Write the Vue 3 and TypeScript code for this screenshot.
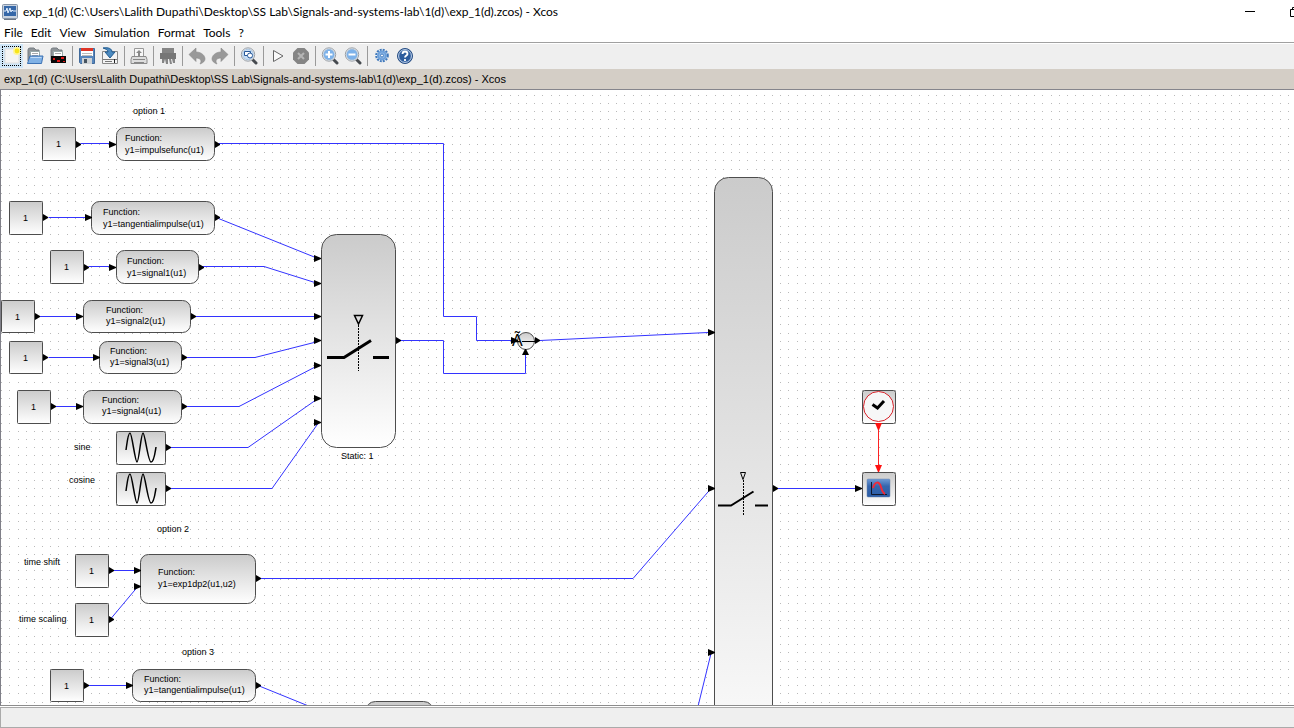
<script setup lang="ts">
import { ref } from 'vue'

interface Point { x: number; y: number }
interface Block extends Point { w: number; h: number }
interface FunctionBlock extends Block { tx: number; ty: number; lead: number; body: string }
interface Label extends Point { text: string }
type Direction = 'right' | 'up' | 'down'
interface Port extends Point { dir: Direction; red?: boolean; small?: boolean }

const documentTitle = 'exp_1(d) (C:\\Users\\Lalith Dupathi\\Desktop\\SS Lab\\Signals-and-systems-lab\\1(d)\\exp_1(d).zcos) - Xcos'
const menus = ['File', 'Edit', 'View', 'Simulation', 'Format', 'Tools', '?']
const active = ref('New')

const toolGroups: string[][] = [
  ['New', 'Open', 'Open in Scilab'],
  ['Save', 'Export'],
  ['Print'],
  ['Delete'],
  ['Undo', 'Redo'],
  ['Fit to view'],
  ['Start', 'Stop'],
  ['Zoom in', 'Zoom out'],
  ['Demonstrations', 'Help'],
]

const constants: Block[] = [
  { x: 42, y: 127, w: 33, h: 33 },
  { x: 9, y: 201, w: 33, h: 33 },
  { x: 50, y: 250, w: 33, h: 33 },
  { x: 1, y: 300, w: 33, h: 32 },
  { x: 9, y: 341, w: 33, h: 32 },
  { x: 17, y: 390, w: 33, h: 33 },
  { x: 75, y: 554, w: 33, h: 33 },
  { x: 75, y: 603, w: 33, h: 33 },
  { x: 50, y: 669, w: 33, h: 32 },
]

const functions: FunctionBlock[] = [
  { x: 116, y: 127, w: 98, h: 33, tx: 125, ty: 141, lead: 12, body: 'y1=impulsefunc(u1)' },
  { x: 91, y: 201, w: 123, h: 33, tx: 103, ty: 215, lead: 12, body: 'y1=tangentialimpulse(u1)' },
  { x: 116, y: 250, w: 82, h: 33, tx: 127, ty: 264, lead: 12, body: 'y1=signal1(u1)' },
  { x: 83, y: 300, w: 107, h: 32, tx: 106, ty: 313, lead: 11, body: 'y1=signal2(u1)' },
  { x: 99, y: 341, w: 82, h: 32, tx: 110, ty: 354, lead: 11, body: 'y1=signal3(u1)' },
  { x: 83, y: 390, w: 98, h: 33, tx: 102, ty: 403, lead: 11, body: 'y1=signal4(u1)' },
  { x: 140, y: 554, w: 115, h: 49, tx: 158, ty: 575, lead: 12, body: 'y1=exp1dp2(u1,u2)' },
  { x: 132, y: 669, w: 123, h: 32, tx: 144, ty: 682, lead: 11, body: 'y1=tangentialimpulse(u1)' },
]

const generators: Point[] = [{ x: 116, y: 431 }, { x: 116, y: 472 }]

const labels: Label[] = [
  { x: 133, y: 114, text: 'option 1' },
  { x: 74, y: 450, text: 'sine' },
  { x: 69, y: 483, text: 'cosine' },
  { x: 341, y: 459, text: 'Static: 1' },
  { x: 157, y: 532, text: 'option 2' },
  { x: 24, y: 565, text: 'time shift' },
  { x: 19, y: 622, text: 'time scaling' },
  { x: 182, y: 655, text: 'option 3' },
]

const straightWires: string[] = [
  '80,143 110,143', '218,143 443,143 443,316 476,316 476,340 512,340',
  '48,217 86,217', '88,266 110,266', '39,316 78,316', '48,357 94,357', '55,406 78,406',
  '194,316 315,316', '400,340 443,340 443,373 525,373 525,354',
  '113,570 135,570', '777,488 856,488', '88,685 127,685',
]

const slopedWires: string[] = [
  '216,217 318,258', '202,266 264,266 318,283', '185,357 255,357 318,341',
  '185,406 239,406 318,365', '168,447 248,447 318,398', '168,488 272,488 318,423',
  '540,340 708,332', '111,618 137,587', '259,578 633,578 711,488',
  '258,685 332,715', '711,653 696,714',
]

const ports: Port[] = [
  ...[[76, 144], [43, 217], [84, 267], [35, 316], [43, 357], [51, 406], [109, 570], [109, 619], [84, 685],
    [215, 144], [215, 217], [199, 267], [191, 316], [182, 357], [182, 406], [256, 578], [256, 685],
    [166, 447], [166, 488], [396, 340], [773, 488], [535, 340]]
    .map(([x, y]): Port => ({ x, y, dir: 'right', small: true })),
  ...[[109, 144], [85, 217], [109, 267], [76, 316], [93, 357], [76, 406], [134, 570], [134, 586], [126, 685],
    [314, 258], [314, 283], [314, 316], [314, 340], [314, 365], [314, 398], [314, 422],
    [511, 340], [708, 332], [708, 488], [708, 652], [855, 488]]
    .map(([x, y]): Port => ({ x, y, dir: 'right' })),
  { x: 525, y: 355, dir: 'up' },
  { x: 878, y: 423, dir: 'down', red: true },
  { x: 878, y: 465, dir: 'down', red: true },
]

function portPath(p: Port): string {
  if (p.dir === 'up') return `M${p.x - 3},${p.y}h7l-3,-6h-1z`
  if (p.dir === 'down') return `M${p.x - 3},${p.y}h7l-3,7h-1z`
  return `M${p.x},${p.y - 3}v7l${p.small ? 5 : 7},-3v-1z`
}

const sineWave = 'M10 19C11 12 12 2 14 2S19 31 21 31S25 2 27 2S32 31 35 31S39 22 40 16'

function buildGrid(columns: number, rows: number): string {
  const step = 8.2
  let d = ''
  for (let r = 0; r < rows; r++) {
    const y = Math.floor(95.2 + r * step)
    for (let c = 0; c < columns; c++) d += `M${Math.floor(1.6 + c * step)},${y}h1v1h-1z`
  }
  return d
}
const gridPath = buildGrid(240, 130)
</script>

<template>
  <div class="window">
    <header class="titlebar">
      <svg class="app-icon" width="16" height="16" viewBox="0 0 16 16" aria-hidden="true">
        <rect x=".5" y=".5" width="15" height="14" rx="1" fill="#c9d3df" stroke="#8795a8" />
        <rect x="2" y="2" width="12" height="10" fill="#3567a8" />
        <path d="M2 7h2l1-3 1 5 2-5 1 4 1-2 1 1h3" fill="none" stroke="#e5f1ff" />
        <path d="M2 15.5h12" stroke="#6d7785" />
      </svg>
      <h1 class="title">{{ documentTitle }}</h1>
      <div class="caption">
        <button type="button" aria-label="Minimize"><svg width="12" height="12"><path d="M1 5h10v1H1z" /></svg></button>
        <button type="button" aria-label="Restore"><svg width="12" height="12"><path d="M.5 3.500h7v7h-7zM2.500 3V1.500h7v7H8" fill="none" stroke="#000" /></svg></button>
      </div>
    </header>

    <nav class="menubar" aria-label="Main menu">
      <button v-for="m in menus" :key="m" type="button">{{ m }}</button>
    </nav>

    <div class="toolbar" role="toolbar" aria-label="Tools">
      <div v-for="(group, gi) in toolGroups" :key="gi" class="group">
        <button
          v-for="tool in group" :key="tool" type="button" :aria-label="tool"
          :class="{ active: active === tool }" @click="active = tool"
        >
          <svg width="18" height="18" viewBox="0 0 18 18" aria-hidden="true">
            <g v-if="tool === 'New'">
              <path d="M2 2h14v14H2z" fill="#f4f4f4" stroke="#ddd" />
              <circle cx="14" cy="4" r="4" fill="#fff59a" /><circle cx="14" cy="4" r="2.400" fill="#f7e51c" />
            </g>
            <g v-else-if="tool === 'Open'">
              <path d="M2 14V3q0-2 2-2h4l2 2h3v6" fill="#8e9498" stroke="#777d82" />
              <path d="M4.500 4.500h9v8h-9z" fill="#fff" stroke="#9aa" /><path d="M6 6.500h6M6 8.500h6" stroke="#aaa" />
              <path d="M4 9h13l-1.500 7.500H1.500z" fill="#80b1e5" stroke="#3d72b4" /><path d="M4.500 10.500h11" stroke="#c2dcf7" />
            </g>
            <g v-else-if="tool === 'Open in Scilab'">
              <path d="M2 14V3q0-2 2-2h4l2 2h3v6" fill="#8e9498" stroke="#777d82" />
              <path d="M4.500 4.500h9v6h-9z" fill="#fff" stroke="#9aa" /><path d="M6 6.500h6" stroke="#aaa" />
              <path d="M2 9h15v7H2z" fill="#080808" />
              <path d="M4 11h2v2H4zM8 13h3v2H8zM12 10h3v2h-3zM14 14h2v1h-2z" fill="#e01818" />
            </g>
            <g v-else-if="tool === 'Save'">
              <path d="M1.500 1.500h15v15h-14l-1-1z" fill="#5686bd" stroke="#416a9b" />
              <path d="M3 2h12v7H3z" fill="#fff" /><path d="M3 1h12v3H3z" fill="#de3527" />
              <path d="M4 6.500h10M4 8.500h10" stroke="#bbb" />
              <path d="M4 11h10v6H4z" fill="#cfd3d6" /><path d="M6 12h3v4H6z" fill="#465461" />
            </g>
            <g v-else-if="tool === 'Export'">
              <path d="M1.500 4.500h15v12h-15z" fill="#f4f4f4" stroke="#888" /><path d="M2 12.500h14M4 14.500h7" stroke="#777" />
              <path d="M13.500 12v4" stroke="#222" />
              <path d="M2 1c6-1 9 1 9 4h3l-5 6-5-6h3C7 3 5 2 2 1z" fill="#4c8ac0" stroke="#235d91" />
            </g>
            <g v-else-if="tool === 'Print'">
              <path d="M4.500 1.500h9v9h-9z" fill="#f7f7f7" stroke="#999" />
              <path d="M9 3l3 3h-2v3H8V6H6z" fill="#888" />
              <path d="M2 9.500h14l1 3v4H1v-4z" fill="#ddd" stroke="#8b8b8b" /><path d="M3 12.500h12M4 15.500h10" stroke="#888" />
            </g>
            <g v-else-if="tool === 'Delete'" fill="#858585">
              <path d="M3 1h12v5H3z" /><path d="M1 6h16v6H1z" fill="#767676" />
              <path d="M3 12h3l-1 4H3zM6 12h3v5H7zM10 12h2l1 5h-2zM13 12h3v4h-2z" />
            </g>
            <path v-else-if="tool === 'Undo'" d="M1 7.500L8 1v4c6 0 9 4 9 7 0 2-2 4-5 5 2-3 1-6-4-6v3.500z" fill="#999" stroke="#888" stroke-width=".6" />
            <path v-else-if="tool === 'Redo'" d="M17 7.500L10 1v4c-6 0-9 4-9 7 0 2 2 4 5 5-2-3-1-6 4-6v3.500z" fill="#999" stroke="#888" stroke-width=".6" />
            <g v-else-if="tool === 'Fit to view' || tool === 'Zoom in' || tool === 'Zoom out'">
              <path d="M12.500 12.500l3.500 3.500" stroke="#474b50" stroke-width="3" stroke-linecap="round" />
              <circle cx="8" cy="7.500" r="6.700" fill="#e9ecef" stroke="#9ca1a7" />
              <circle cx="8" cy="7.500" r="5.300" :fill="tool === 'Fit to view' ? '#c8def4' : '#7db2ea'" stroke="#8ab0d6" stroke-width=".6" />
              <g v-if="tool === 'Fit to view'">
                <path d="M4.500 4.500h6v4h-6z" fill="#fff" stroke="#28599a" />
                <circle cx="10" cy="8.500" r="2.500" fill="#fff" stroke="#28599a" />
              </g>
              <path v-else-if="tool === 'Zoom in'" d="M8 4v7M4.500 7.500h7" stroke="#fff" stroke-width="2" />
              <path v-else d="M4.500 7.500h7" stroke="#fff" stroke-width="2" />
            </g>
            <path v-else-if="tool === 'Start'" d="M4.500 3.500L14 9l-9.500 5.500z" fill="#fafafa" stroke="#666" />
            <g v-else-if="tool === 'Stop'">
              <path d="M5.500 1h7L17 5.500v7L12.500 17h-7L1 12.500v-7z" fill="#858585" />
              <path d="M6 6l6 6M12 6l-6 6" stroke="#b5b5b5" stroke-width="2" />
            </g>
            <g v-else-if="tool === 'Demonstrations'" fill="none">
              <circle cx="9" cy="8.500" r="5.800" stroke="#3f78bb" stroke-width="2" stroke-dasharray="2 1.040" />
              <circle cx="9" cy="8.500" r="4" fill="#8cb7e6" stroke="#6da0da" stroke-width="2" />
              <circle cx="9" cy="8.500" r="1.500" fill="#f3f7fc" stroke="#477fc0" />
            </g>
            <g v-else>
              <circle cx="9" cy="9" r="7.500" fill="#2d5c9d" stroke="#2a4f84" />
              <circle cx="9" cy="9" r="6.400" fill="none" stroke="#c8d8ed" />
              <path d="M6.500 7q0-2.500 2.500-2.500T11.500 7c0 1.500-2.500 1.700-2.500 3.500M9 12v2" fill="none" stroke="#fff" stroke-width="1.800" />
            </g>
          </svg>
        </button>
      </div>
    </div>

    <h2 class="doc-title">{{ documentTitle }}</h2>

    <main class="pane">
      <svg class="diagram" role="img" aria-label="Block diagram">
        <defs>
          <linearGradient id="shade" x1="0" y1="0" x2="0" y2="1">
            <stop offset="0" stop-color="#cbcbcb" /><stop offset="1" stop-color="#fff" />
          </linearGradient>
          <linearGradient id="screen" x1="0" y1="0" x2="0" y2="1">
            <stop offset="0" stop-color="#6f9bd6" /><stop offset=".4" stop-color="#3566ae" /><stop offset="1" stop-color="#2c5da6" />
          </linearGradient>
        </defs>
        <g transform="translate(-1 -90)">
          <path :d="gridPath" class="grid" />

          <g class="outline">
            <rect v-for="(b, i) in constants" :key="'c' + i" :x="b.x + 0.5" :y="b.y + 0.5" :width="b.w" :height="b.h" rx="1" />
            <rect v-for="(b, i) in functions" :key="'f' + i" :x="b.x + 0.5" :y="b.y + 0.5" :width="b.w" :height="b.h" rx="8" />
            <rect v-for="(b, i) in generators" :key="'g' + i" :x="b.x + 0.5" :y="b.y + 0.5" width="49" height="33" rx="2" />
            <rect x="321.500" y="234.500" width="74" height="213" rx="15" />
            <rect x="714.500" y="177.500" width="58" height="621" rx="14" />
            <rect x="365.500" y="701.500" width="68" height="140" rx="10" />
            <rect x="862.500" y="390.500" width="33" height="33" rx="2" />
            <rect x="862.500" y="472.500" width="33" height="33" rx="2" />
            <circle cx="526" cy="341" r="8.500" />
          </g>

          <g class="wire">
            <g transform="translate(.5 .5)">
              <polyline v-for="w in straightWires" :key="w" :points="w" />
            </g>
            <g transform="translate(0 .5)">
              <polyline v-for="w in slopedWires" :key="w" :points="w" />
            </g>
            <path class="event" d="M878.500 430V466" />
          </g>

          <path v-for="(p, i) in ports" :key="'p' + i" :d="portPath(p)" :class="p.red ? 'port-red' : 'port'" />

          <g class="text">
            <text v-for="(b, i) in constants" :key="'ct' + i" :x="b.x + 14" :y="b.y + 20">1</text>
            <template v-for="(b, i) in functions" :key="'ft' + i">
              <text :x="b.tx" :y="b.ty">Function:</text>
              <text :x="b.tx" :y="b.ty + b.lead">{{ b.body }}</text>
            </template>
            <text v-for="l in labels" :key="l.text" :x="l.x" :y="l.y">{{ l.text }}</text>
            <text x="512" y="346" class="glyph">Ã</text>
          </g>

          <g class="ink">
            <path
              v-for="(g, i) in generators" :key="'w' + i" :d="sineWave"
              :transform="`translate(${g.x} ${g.y})`" stroke-width="1.500"
            />
            <path d="M327 357.500H344L371 340.500M373 357.500H389" stroke-width="3" />
            <path d="M354.500 315.500h8l-4 8.500z" stroke-width="1.500" />
            <path d="M358.500 325v46" stroke-dasharray="2 1" />
            <path d="M718 505.500H731L753.500 491.500M755 505.500H768" stroke-width="2" />
            <path d="M740.500 472.500h5l-2.500 7z" />
            <path d="M743.500 480v35" stroke-dasharray="2 1" />
            <path d="M522 341.500h13" />
          </g>

          <circle cx="878.500" cy="406.500" r="15" class="clock" />
          <path d="M872.500 404.500l5 3.500 6.500-7" class="hands" />
          <rect x="867" y="479" width="23" height="18" rx="1" fill="url(#screen)" stroke="#6d85a8" stroke-width=".5" />
          <path d="M871.500 482v12.500H887" class="axes" />
          <path d="M873 488c2-7 6-7 8-1 1 4 2 6 4 7" class="trace" />
        </g>
      </svg>
    </main>

    <footer class="status" role="status"></footer>
  </div>
</template>

<style>
html, body, #app { height: 100%; }
body { margin: 0; overflow: hidden; }
</style>

<style scoped>
.window { display: flex; flex-direction: column; height: 100vh; background: #fff; color: #000; font-family: Lato, "Open Sans", sans-serif; font-size: 12px; }
button { margin: 0; padding: 0; border: 0; background: none; color: inherit; font: inherit; }
h1, h2 { margin: 0; font-weight: 400; }

.titlebar { display: flex; align-items: center; height: 23px; flex: none; padding-left: 2px; }
.app-icon { flex: none; }
.title { flex: 1; min-width: 0; padding-left: 5px; font-size: 12px; line-height: 22px; white-space: nowrap; overflow: hidden; }
.caption { display: flex; flex: none; width: 67px; height: 20px; overflow: hidden; }
.caption button { flex: none; display: flex; align-items: center; justify-content: center; width: 46px; }

.menubar { display: flex; align-items: center; gap: 8px; height: 19px; flex: none; padding-left: 4px; border-bottom: 1px solid #a0a0a0; }
.menubar button { line-height: 18px; }

.toolbar { display: flex; align-items: flex-start; height: 25px; flex: none; border-top: 1px solid #fff; background: #efefef; }
.group { display: flex; }
.group + .group::before { content: ""; width: 1px; height: 20px; margin: 2px 2px 0 3px; background: #9a9a9a; }
.group button { display: flex; align-items: center; justify-content: center; width: 23px; height: 24px; }
.group button.active { background: #cfe6f8; outline: 1px dotted #000; outline-offset: -3px; }

.doc-title { flex: none; height: 20px; padding-left: 4px; border-bottom: 1px solid #85858c; background: #d4cec6; font: 11px/20px "Liberation Sans", Arial, sans-serif; white-space: nowrap; overflow: hidden; }

.pane { flex: 1; min-height: 0; border-left: 1px solid #7f7f88; border-bottom: 1px solid #8c8c8c; overflow: hidden; }
.diagram { display: block; width: 100%; height: 100%; }
.grid { fill: #b9b9b9; shape-rendering: crispEdges; }
.outline > * { fill: url(#shade); stroke: #4d4d4d; stroke-width: 1; }
.wire polyline { fill: none; stroke: #3333ff; stroke-width: 1; }
.event { stroke: #f22; stroke-width: 1; }
.port { fill: #000; }
.port-red { fill: #f11; }
.text { font-family: "Liberation Sans", Arial, sans-serif; font-size: 9px; fill: #000; }
.glyph { font-size: 16px; }
.ink > path { fill: none; stroke: #000; }
.clock { fill: #f7f7f7; stroke: #d8222a; stroke-width: 1; }
.hands { fill: none; stroke: #000; stroke-width: 3; }
.axes { fill: none; stroke: #10182c; }
.trace { fill: none; stroke: #f02a38; stroke-width: 2; }

.status { flex: none; box-sizing: border-box; height: 21px; margin-top: 1px; border: 1px solid #aaa; border-right: 0; background: #efefef; }
</style>
